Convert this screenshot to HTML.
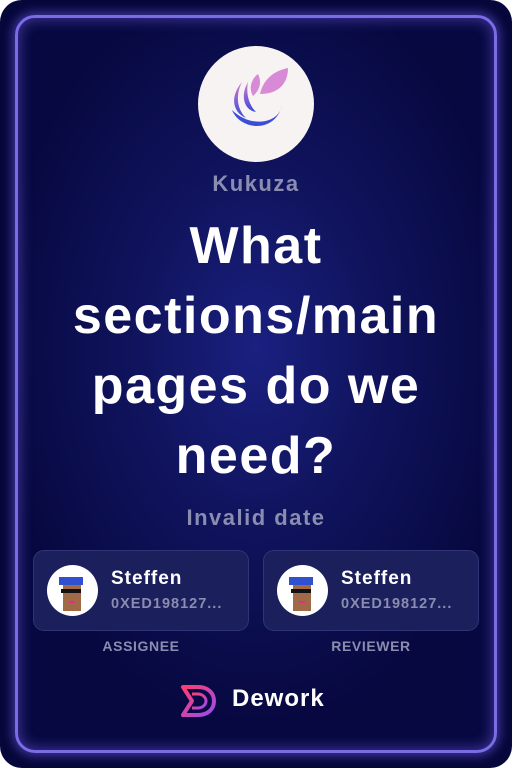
<!DOCTYPE html>
<html><head><meta charset="utf-8"><style>
*{margin:0;padding:0;box-sizing:border-box}
html,body{width:512px;height:768px;background:#fff;overflow:hidden;font-family:"Liberation Sans",sans-serif}
.outer{position:absolute;left:0;top:0;width:512px;height:768px;border-radius:22px;background:#06073a;overflow:hidden}
.inner{position:absolute;left:15px;top:15px;width:482px;height:738px;border-radius:20px;border:3px solid #7b6be6;
background:radial-gradient(ellipse 260px 380px at 50% 45%,#1a2080 0%,#10145e 45%,#070840 100%);
box-shadow:0 0 10px 3px rgba(110,90,230,.55),inset 0 0 12px 3px rgba(110,90,230,.45)}
.c{position:absolute;left:0;width:512px;text-align:center;font-weight:bold}
.logo{position:absolute;left:198px;top:46px;width:116px;height:116px;border-radius:50%;background:#f8f3f3}
.title{top:211px;color:#fff;font-size:52px;line-height:70px;letter-spacing:1.5px}
.card{position:absolute;top:550px;width:216px;height:81px;border-radius:11px;background:#1b1f5c;border:1px solid #2e3475}
.av{position:absolute;left:13px;top:14px;width:51px;height:51px;border-radius:50%;background:#fff;overflow:hidden}
.nm{position:absolute;left:77px;top:17px;color:#fff;font-size:19px;font-weight:bold;letter-spacing:1px}
.ad{position:absolute;left:77px;top:45px;color:#8a8db0;font-size:14.5px;font-weight:bold;letter-spacing:1px}
.lb{position:absolute;top:638px;width:216px;text-align:center;color:#8a8db0;font-size:14px;font-weight:bold;letter-spacing:.6px}
</style></head><body>
<div class="outer"><div class="inner"></div></div>
<div class="logo"><svg width="116" height="116" viewBox="0 0 116 116">
<defs><linearGradient id="g" x1="0" y1="0" x2="0" y2="1"><stop offset="0" stop-color="#d67ad0"/><stop offset="1" stop-color="#3a4ad8"/></linearGradient></defs>
<path d="M62 48 C66 30 80 24 90 22 C90 38 80 48 62 48Z" fill="#d98ad6"/>
<path d="M55 50 C50 42 54 32 60 28 C64 36 62 44 55 50Z" fill="#d98ad6"/>
<path d="M44 36 C32 50 34 66 48 72 C38 62 38 48 44 36Z" fill="url(#g)"/>
<path d="M50 36 C42 50 46 64 58 66 C50 58 48 46 50 36Z" fill="url(#g)"/>
<path d="M34 64 C42 84 76 88 84 60 C80 78 52 82 34 64Z" fill="#3b4ed8"/>
</svg></div>
<div class="c" style="top:171px;color:#8a8db0;font-size:22px;letter-spacing:1.5px">Kukuza</div>
<div class="c title">What<br>sections/main<br>pages do we<br>need?</div>
<div class="c" style="top:505px;color:#8a8db0;font-size:22px;letter-spacing:1.5px">Invalid date</div>

<div class="card" style="left:33px"><div class="av"><svg width="51" height="51" viewBox="0 0 51 51"><rect x="12" y="12" width="24" height="8" fill="#3050d0"/><rect x="16" y="20" width="18" height="26" fill="#a06a48"/><rect x="14" y="24" width="20" height="4" fill="#111"/><rect x="22" y="36" width="6" height="2" fill="#e03080"/></svg></div><div class="nm">Steffen</div><div class="ad">0XED198127...</div></div>
<div class="card" style="left:263px"><div class="av"><svg width="51" height="51" viewBox="0 0 51 51"><rect x="12" y="12" width="24" height="8" fill="#3050d0"/><rect x="16" y="20" width="18" height="26" fill="#a06a48"/><rect x="14" y="24" width="20" height="4" fill="#111"/><rect x="22" y="36" width="6" height="2" fill="#e03080"/></svg></div><div class="nm">Steffen</div><div class="ad">0XED198127...</div></div>
<div class="lb" style="left:33px">ASSIGNEE</div>
<div class="lb" style="left:263px">REVIEWER</div>

<svg style="position:absolute;left:180px;top:683px" width="38" height="36" viewBox="0 0 38 36">
<defs><linearGradient id="d" x1="0" y1="0" x2="1" y2="1"><stop offset="0" stop-color="#ff3d6e"/><stop offset="1" stop-color="#9a4cf0"/></linearGradient></defs>
<path d="M3 4 H18 C28 4 34 10 34 18 C34 26 28 32 18 32 H3 L12 18 Z" fill="none" stroke="url(#d)" stroke-width="4" stroke-linejoin="round"/>
<path d="M12 11 H18 C22 11 26 14 26 18 C26 22 22 25 18 25 H12" fill="none" stroke="url(#d)" stroke-width="3"/>
</svg>
<div style="position:absolute;left:232px;top:685px;color:#fff;font-size:24px;font-weight:bold;letter-spacing:1px">Dework</div>
</body></html>
